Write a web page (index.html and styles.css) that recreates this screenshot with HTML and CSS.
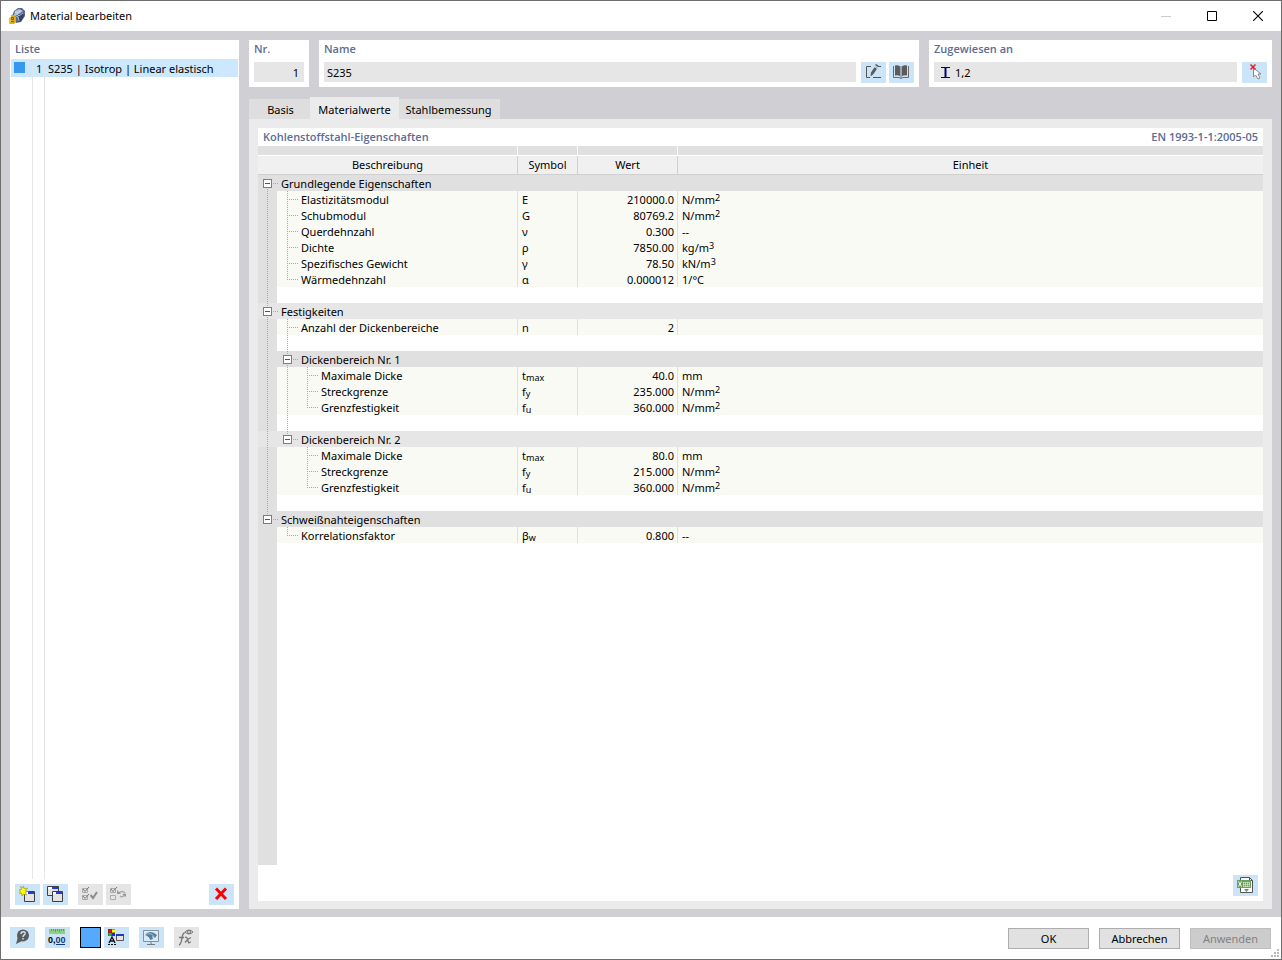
FILE: index.html
```html
<!DOCTYPE html>
<html lang="de">
<head>
<meta charset="utf-8">
<title>Material bearbeiten</title>
<link rel="stylesheet" href="styles.css">
</head>
<body>
<div class="window">
  <header class="titlebar">
    <svg class="app-icon" width="17" height="16" viewBox="0 0 17 16" aria-hidden="true">
      <path d="M3 8L5 3l4-3h4l3 3v5l-4 6-5 1z" fill="#56688c"/>
      <path d="M6 3l4-2 4 2-4 3-5 2z" fill="#b3c1dd"/>
      <path d="M10 7l4-2 1 3-3 5-3 1z" fill="#34425f"/>
      <path d="M6 4l3 1 3-3M8 6l2 2 4-3M5 7l4 2 1 4" fill="none" stroke="#e0e7f4" stroke-width=".7"/>
      <path d="M2 7h4v2h1v5l-2 2H1l-1-1v-5l2-1z" fill="#e0ac19"/>
      <path d="M2.500 9.500h2v2h-2zM2 13.500h3" stroke="#795b17" fill="none"/>
      <path d="M1 10v4" stroke="#ffe06a" fill="none"/>
    </svg>
    <h1 class="title">Material bearbeiten</h1>
    <div class="window-buttons">
      <button class="window-button" aria-label="Minimieren" disabled><svg width="10" height="10"><path d="M0 5.500h10" stroke="#ccc"/></svg></button>
      <button class="window-button" aria-label="Maximieren"><svg width="10" height="10"><path d="M.5.5h9v9h-9z" fill="none" stroke="#000"/></svg></button>
      <button class="window-button" aria-label="Schließen"><svg width="10" height="10"><path d="M0 0l10 10M10 0L0 10" stroke="#000" stroke-width="1.100"/></svg></button>
    </div>
  </header>

  <main class="content">
    <section class="list-panel">
      <h2 class="label">Liste</h2>
      <ul class="list">
        <li class="list-row">
          <span class="list-swatch"></span><span class="list-number">1</span><span class="list-text">S235 | Isotrop | Linear elastisch</span>
        </li>
      </ul>
      <div class="list-tools">
        <button class="tool" aria-label="Neu"><svg width="25" height="21" viewBox="0 0 25 21">
          <path d="M9.500 7.500h10v10h-10z" fill="#e4e4e4" stroke="#404040"/><path d="M10 8h9v2h-9z" fill="#fff"/><path d="M13 8h6v2h-6z" fill="#2639dc"/>
          <path d="M8.500 2l1 3 3-1-2 2.500 3 1-3 .5 1 3-3-1-1.500 2-.5-3-2 .5 1-2.500-1.500-1 2.500-.5-1-3 2.500 1.500z" fill="#ff0" stroke="#8c8c20" stroke-width=".6"/></svg></button>
        <button class="tool" aria-label="Kopieren"><svg width="25" height="21" viewBox="0 0 25 21">
          <path d="M4.500 2.500h11v9h-11z" fill="#e4e4e4" stroke="#404040"/><path d="M5 3h10v2H5z" fill="#fff"/><path d="M9 3h6v2H9z" fill="#2639dc"/>
          <path d="M9.500 7.500h10v10h-10z" fill="#e4e4e4" stroke="#404040"/><path d="M10 8h9v2h-9z" fill="#fff"/><path d="M13 8h6v2h-6z" fill="#2639dc"/></svg></button>
        <button class="tool tool-off tool-gap" aria-label="Alle auswählen" disabled><svg width="25" height="21" viewBox="0 0 25 21" fill="none" stroke="#aaa">
          <path d="M4.500 4.500h5v4h-5zM4.500 11.500h5v4h-5z"/><path d="M5 5l2 2.500 4-4.500M5 12l2 2.500 4-4.500" stroke="#777"/><path d="M12.500 11l2.500 3 4-6" stroke="#8d8d8d" stroke-width="2"/></svg></button>
        <button class="tool tool-off" aria-label="Auswahl umkehren" disabled><svg width="25" height="21" viewBox="0 0 25 21" fill="none" stroke="#aaa">
          <path d="M4.500 4.500h5v4h-5zM4.500 11.500h5v4h-5z"/><path d="M5 5l2 2.500 4-4.500" stroke="#777"/><path d="M13 9q3-3 6 0M19 11q-3 3-5 1" stroke-width="1.500"/><path d="M11 6v4h4zM20 13V9.500l-4 .5z" fill="#999" stroke="none"/></svg></button>
        <button class="tool tool-end" aria-label="Löschen"><svg width="25" height="21" viewBox="0 0 25 21"><path d="M7 4.500l10 10.500M17 4.500L7 15" stroke="#f00" stroke-width="3"/></svg></button>
      </div>
    </section>

    <div class="editor">
      <div class="fields">
        <div class="card card-number">
          <label class="label" for="nr">Nr.</label>
          <div class="field-row"><input class="field field-right" id="nr" value="1" readonly></div>
        </div>
        <div class="card card-name">
          <label class="label" for="name">Name</label>
          <div class="field-row">
            <input class="field" id="name" value="S235" readonly>
            <button class="tool" aria-label="Bearbeiten"><svg width="25" height="21" viewBox="0 0 25 21">
              <path d="M10 4.500H5.500v11H9M12 15.500h8M17 4.500h3" fill="none" stroke="#555"/><path d="M9.500 14.500l.5-4 4-6 2.500 1.500-4 6z" fill="#5b5b5b"/><path d="M13 4.500l3.500 2.500" stroke="#cce4f7" stroke-width=".8"/><path d="M14 3l1-1 2.500 1.500-.5 1.500z" fill="#5b5b5b"/></svg></button>
            <button class="tool" aria-label="Bibliothek"><svg width="25" height="21" viewBox="0 0 25 21">
              <path d="M6 3.500q3-1 5 1V14q-2-1-5-.5zM18 3.500q-3-1-5 1V14q2-1 5-.5z" fill="#5b5b5b"/><path d="M4.500 4v11.500h5.500l2 1 2-1h5.500V4M12 4v12" fill="none" stroke="#6b6b6b"/></svg></button>
          </div>
        </div>
        <div class="card card-assigned">
          <label class="label" for="assigned">Zugewiesen an</label>
          <div class="field-row">
            <div class="field field-icon">
              <svg width="9" height="12" viewBox="0 0 9 12" aria-hidden="true"><path d="M0 .5h9M0 10.500h9" stroke="#00007c"/><path d="M4.500 0v11" stroke="#00007c" stroke-width="2"/></svg>
              <input class="field-inner" id="assigned" value="1,2" readonly>
            </div>
            <button class="tool" aria-label="Auswählen"><svg width="25" height="21" viewBox="0 0 25 21">
              <path d="M11.500 6v9l2-2 2.500 4 2-1-2-4h3z" fill="#fff" stroke="#888"/><path d="M8.500 2.500l5 5M13.500 2.500l-5 5" stroke="#e81c2c" stroke-width="1.500"/></svg></button>
          </div>
        </div>
      </div>

      <div class="tabs" role="tablist">
        <button class="tab tab-first" role="tab" aria-selected="false">Basis</button>
        <button class="tab tab-active" role="tab" aria-selected="true">Materialwerte</button>
        <button class="tab tab-last" role="tab" aria-selected="false">Stahlbemessung</button>
      </div>

      <section class="pane" role="tabpanel">
        <div class="sheet">
          <div class="sheet-head"><h2 class="label">Kohlenstoffstahl-Eigenschaften</h2><span class="label">EN 1993-1-1:2005-05</span></div>
          <table class="grid">
            <colgroup><col class="col-name"><col class="col-symbol"><col class="col-value"><col></colgroup>
            <thead>
              <tr class="band"><td></td><td></td><td></td><td></td></tr>
              <tr class="heads"><th>Beschreibung</th><th>Symbol</th><th>Wert</th><th>Einheit</th></tr>
            </thead>
            <tbody>
              <tr class="group"><td colspan="4"><div class="tree"><span class="guide line-down"><button class="toggle" aria-label="Zuklappen"></button></span>Grundlegende Eigenschaften</div></td></tr>
              <tr class="leaf"><td><div class="tree"><span class="guide line"></span><span class="guide tee"></span>Elastizitätsmodul</div></td><td>E</td><td>210000.0</td><td>N/mm<sup>2</sup></td></tr>
              <tr class="leaf"><td><div class="tree"><span class="guide line"></span><span class="guide tee"></span>Schubmodul</div></td><td>G</td><td>80769.2</td><td>N/mm<sup>2</sup></td></tr>
              <tr class="leaf"><td><div class="tree"><span class="guide line"></span><span class="guide tee"></span>Querdehnzahl</div></td><td>ν</td><td>0.300</td><td>--</td></tr>
              <tr class="leaf"><td><div class="tree"><span class="guide line"></span><span class="guide tee"></span>Dichte</div></td><td>ρ</td><td>7850.00</td><td>kg/m<sup>3</sup></td></tr>
              <tr class="leaf"><td><div class="tree"><span class="guide line"></span><span class="guide tee"></span>Spezifisches Gewicht</div></td><td>γ</td><td>78.50</td><td>kN/m<sup>3</sup></td></tr>
              <tr class="leaf"><td><div class="tree"><span class="guide line"></span><span class="guide corner"></span>Wärmedehnzahl</div></td><td>α</td><td>0.000012</td><td>1/°C</td></tr>
              <tr class="blank"><td colspan="4"><div class="tree"><span class="guide line"></span></div></td></tr>
              <tr class="group group-light"><td colspan="4"><div class="tree"><span class="guide line"><button class="toggle" aria-label="Zuklappen"></button></span>Festigkeiten</div></td></tr>
              <tr class="leaf"><td><div class="tree"><span class="guide line"></span><span class="guide tee"></span>Anzahl der Dickenbereiche</div></td><td>n</td><td>2</td><td></td></tr>
              <tr class="blank"><td colspan="4"><div class="tree"><span class="guide line"></span><span class="guide line"></span></div></td></tr>
              <tr class="group"><td colspan="4"><div class="tree"><span class="guide line"></span><span class="guide line"><button class="toggle" aria-label="Zuklappen"></button></span>Dickenbereich Nr. 1</div></td></tr>
              <tr class="leaf"><td><div class="tree"><span class="guide line"></span><span class="guide line"></span><span class="guide tee"></span>Maximale Dicke</div></td><td>t<sub>max</sub></td><td>40.0</td><td>mm</td></tr>
              <tr class="leaf"><td><div class="tree"><span class="guide line"></span><span class="guide line"></span><span class="guide tee"></span>Streckgrenze</div></td><td>f<sub>y</sub></td><td>235.000</td><td>N/mm<sup>2</sup></td></tr>
              <tr class="leaf"><td><div class="tree"><span class="guide line"></span><span class="guide line"></span><span class="guide corner"></span>Grenzfestigkeit</div></td><td>f<sub>u</sub></td><td>360.000</td><td>N/mm<sup>2</sup></td></tr>
              <tr class="blank"><td colspan="4"><div class="tree"><span class="guide line"></span><span class="guide line"></span></div></td></tr>
              <tr class="group group-light"><td colspan="4"><div class="tree"><span class="guide line"></span><span class="guide line-up"><button class="toggle" aria-label="Zuklappen"></button></span>Dickenbereich Nr. 2</div></td></tr>
              <tr class="leaf"><td><div class="tree"><span class="guide line"></span><span class="guide"></span><span class="guide tee"></span>Maximale Dicke</div></td><td>t<sub>max</sub></td><td>80.0</td><td>mm</td></tr>
              <tr class="leaf"><td><div class="tree"><span class="guide line"></span><span class="guide"></span><span class="guide tee"></span>Streckgrenze</div></td><td>f<sub>y</sub></td><td>215.000</td><td>N/mm<sup>2</sup></td></tr>
              <tr class="leaf"><td><div class="tree"><span class="guide line"></span><span class="guide"></span><span class="guide corner"></span>Grenzfestigkeit</div></td><td>f<sub>u</sub></td><td>360.000</td><td>N/mm<sup>2</sup></td></tr>
              <tr class="blank"><td colspan="4"><div class="tree"><span class="guide line"></span></div></td></tr>
              <tr class="group"><td colspan="4"><div class="tree"><span class="guide line-up"><button class="toggle" aria-label="Zuklappen"></button></span>Schweißnahteigenschaften</div></td></tr>
              <tr class="leaf"><td><div class="tree"><span class="guide"></span><span class="guide corner"></span>Korrelationsfaktor</div></td><td>β<sub>w</sub></td><td>0.800</td><td>--</td></tr>
            </tbody>
          </table>
          <div class="gutter"></div>
          <div class="sheet-foot">
            <button class="tool" aria-label="Excel-Export"><svg width="25" height="21" viewBox="0 0 25 21">
              <path d="M7.500 2.500h9l3 3v12h-12z" fill="#fff" stroke="#555"/><path d="M16.500 2.500v3h3" fill="none" stroke="#555"/><path d="M4 5h14v8H4z" fill="#6b9f5b"/>
              <path d="M5.500 6.500l3 5M8.500 6.500l-3 5" stroke="#fff"/><path d="M10.500 7v5M12.500 7v5M14.500 7v5M16.500 7v5M10 7.500h7M10 9.500h7M10 11.500h7" stroke="#cfe5c6" stroke-width=".7"/><path d="M11 14h5l-2.500 3z" fill="#5b994a"/></svg></button>
          </div>
        </div>
      </section>
    </div>
  </main>

  <footer class="footer">
    <div class="footer-tools">
      <button class="tool" aria-label="Hilfe"><svg width="25" height="21" viewBox="0 0 25 21"><circle cx="13" cy="8.500" r="6" fill="#5b5b5b"/><path d="M8 10l-2 7 6-3z" fill="#5b5b5b"/><path d="M11 7c0-3 5-3 4 0-.5 1-2 1-2 3M13 11v1.500" fill="none" stroke="#cce4f7" stroke-width="1.500"/></svg></button>
      <button class="tool" aria-label="Einheiten"><svg width="25" height="21" viewBox="0 0 25 21"><path d="M4 2h16v5H4z" fill="#8fd183"/><path d="M6.500 2v2M8.500 2v2M10.500 2v3M12.500 2v2M14.500 2v3M16.500 2v2M18.500 2v2" stroke="#5da552"/><text class="icon-digits" x="3" y="16">0,<tspan fill="#123c80">00</tspan></text><path d="M11 17.500h9" stroke="#123c80"/></svg></button>
      <button class="color-swatch" aria-label="Farbe"></button>
      <button class="tool" aria-label="Darstellung"><svg width="25" height="21" viewBox="0 0 25 21"><path d="M4 2h7v7H4z" fill="#444"/><path d="M4.500 2.500h3v3h-3z" fill="#f00"/><path d="M8 2.500h3v3H8z" fill="#ff0"/><path d="M4.500 6h3v3h-3z" fill="#13bd25"/><path d="M8 6h3v3H8z" fill="#22f"/><path d="M5 16l3-6 3 6M6 14h4" fill="none" stroke="#111" stroke-width="1.300"/><path d="M4 17.500h2M7 17.500h2M10 17.500h2" stroke="#111"/><path d="M12.500 7.500h7v6h-7z" fill="#e4e4e4" stroke="#555"/><path d="M12 7h8v2h-8z" fill="#2639ad"/></svg></button>
      <button class="tool tool-gap" aria-label="Ansicht"><svg width="25" height="21" viewBox="0 0 25 21"><path d="M4.500 3.500h15v11h-15z" fill="#d9ebf9" stroke="#87919b"/><path d="M12 15v2M8 17.500h8" stroke="#777"/><path d="M6 8q5-6 12 0l-2 3-3-2 1 3-3 1q0-3-5-5z" fill="#557d9f"/><path d="M7 8q5-3 8 2M9 6q5 0 6 4" fill="none" stroke="#9fc0d9" stroke-width=".6"/></svg></button>
      <button class="tool tool-off tool-gap" aria-label="Formel" disabled><svg width="25" height="21" viewBox="0 0 25 21" fill="none" stroke="#777"><path d="M11 6c-4-1-2 11-6 12M5 10.500h5M11 10.500q2-1 2.500 2l1 3q1 1 2-1M17 10.500q-3 1-6 5" stroke-width="1.300"/><path d="M11 5q4-4 8 0-4 4-8 0z"/><circle cx="15" cy="5" r="1.500"/></svg></button>
    </div>
    <div class="actions">
      <button class="action">OK</button>
      <button class="action">Abbrechen</button>
      <button class="action" disabled>Anwenden</button>
    </div>
    <svg class="grip" width="9" height="9" viewBox="0 0 9 9" aria-hidden="true"><path d="M6 0h2v2H6zM3 3h2v2H3zM6 3h2v2H6zM0 6h2v2H0zM3 6h2v2H3zM6 6h2v2H6z" fill="#bbb"/></svg>
  </footer>
</div>
</body>
</html>
```
FILE: styles.css
```css
* { box-sizing: border-box; }
body { margin: 0; }
body, button, input { font-family: "Noto Sans", "Open Sans", sans-serif; font-size: 11px; line-height: 16px; color: #000; }
button, input { margin: 0; padding: 0; border: 0; border-radius: 0; }
h1, h2, ul { margin: 0; padding: 0; font-weight: normal; list-style: none; }
svg { display: block; flex: none; }

.window { min-height: 100vh; display: flex; flex-direction: column; border: 1px solid #6e6e6e; background: #fff; }

.titlebar { display: flex; align-items: center; height: 30px; padding-left: 8px; gap: 4px; }
.title { flex: 1; font-size: 11px; }
.window-buttons { display: flex; }
.window-button { display: flex; align-items: center; justify-content: center; width: 46px; height: 28px; background: none; }

.content { flex: 1; display: flex; gap: 10px; padding: 9px 9px 8px; background: #d0cfd4; }
.label { display: block; height: 19px; font-family: "Open Sans", "Noto Sans", sans-serif; font-size: 11px; line-height: 18px; font-weight: 600; color: #5c6c94; }

.list-panel { display: flex; flex-direction: column; flex: 0 0 229px; padding-bottom: 4px; background: #fff; }
.list-panel > .label { padding-left: 5px; }
.list { flex: 1; margin: 0 1px 5px; background: linear-gradient(#e6e6e6, #e6e6e6) 21px 0 / 1px 100% no-repeat, linear-gradient(#e6e6e6, #e6e6e6) 33px 0 / 1px 100% no-repeat; }
.list-row { display: flex; align-items: center; height: 18px; background: #cce8ff; line-height: 18px; }
.list-swatch { width: 11px; height: 11px; margin: 0 7px 2px 3px; background: #3898f0; }
.list-number { width: 12px; padding: 1px 0 0 3px; border-left: 1px solid #dce6ef; }
.list-text { padding: 1px 0 0 3px; border-left: 1px solid #dce6ef; }
.list-tools { display: flex; gap: 3px; padding: 0 5px; }

.tool { flex: none; width: 25px; height: 21px; background: #cce4f7; }
.tool-off { background: #e5e5e5; }
.tool-gap { margin-left: 7px; }
.tool-end { margin-left: auto; }

.editor { flex: 1; min-width: 0; display: flex; flex-direction: column; }
.fields { display: flex; gap: 10px; margin-bottom: 10px; }
.card { min-width: 0; padding: 0 5px 4px; background: #fff; }
.card .label { margin-bottom: 3px; }
.card-number { flex: 0 0 60px; }
.card-name { flex: 590 1 0; }
.card-assigned { flex: 333 1 0; }
.field-row { display: flex; gap: 3px; height: 21px; }
.field { flex: 1; min-width: 0; height: 20px; margin-right: 2px; padding: 1px 3px 0; background: #e6e6e6; }
.field-right { margin-right: 0; padding-right: 5px; text-align: right; }
.field-icon { display: flex; align-items: center; gap: 5px; padding-left: 7px; }
.field-inner { flex: 1; min-width: 0; background: none; }

.tabs { display: flex; align-items: flex-end; height: 22px; }
.tab { height: 20px; padding: 2px 0 0 2px; background: #dedede; }
.tab-first { width: 61px; }
.tab-active { width: 89px; height: 22px; padding: 4px 0 0; background: #ebebeb; }
.tab-last { width: 101px; padding: 2px 2px 0 0; }

.pane { flex: 1; display: flex; padding: 9px 9px 8px; background: #ebebeb; }
.sheet { flex: 1; min-width: 0; display: flex; flex-direction: column; background: #fff; }
.sheet-head { display: flex; justify-content: space-between; height: 18px; padding: 0 5px; }

.grid { width: 100%; table-layout: fixed; border-spacing: 0; }
.grid td, .grid th { padding: 0; font-weight: normal; white-space: nowrap; }
.col-name { width: 260px; }
.col-symbol { width: 60px; }
.col-value { width: 100px; }
.band td { height: 10px; background: #e0e0e0; border-right: 1px solid #fff; border-bottom: 1px solid #fff; }
.heads th { height: 19px; background: #f0f0f0; border-right: 1px solid #d0d0d0; border-bottom: 1px solid #d0d0d0; }
.band td:last-child, .heads th:last-child { border-right: 0; }
.group td { background: #e0e0e0; }
.group-light td { background: #e6e6e6; }
.grid .leaf td { height: 16px; padding: 2px 0 0 4px; background: #f9faf4; border-right: 1px solid #e0e0e0; line-height: 14px; }
.grid .leaf td:first-child { padding: 0; }
.grid .leaf td:nth-child(3) { padding-right: 3px; text-align: right; }
.grid .leaf td:last-child { border-right: 0; }
sup, sub { font-size: 9px; line-height: 0; }
sup { vertical-align: 3px; }
sub { vertical-align: -1px; }

.tree { display: flex; height: 16px; padding-right: 3px; line-height: 18px; }
.guide { --down: linear-gradient(#a8a8a8 50%, transparent 50%); --across: linear-gradient(90deg, #a8a8a8 50%, transparent 50%); position: relative; flex: none; width: 20px; height: 16px; }
.guide:last-child { margin-right: 3px; }
.guide:first-child { width: 19px; margin-right: 1px; background-color: #e0e0e0; }
.group .guide:first-child { background-color: transparent; }
.guide:last-child:first-child { margin-right: 4px; }
.guide::before { content: ""; position: absolute; left: 9px; top: 0; width: 1px; height: 0; background: var(--down) 0 0 / 1px 2px; }
.line::before { height: 16px; }
.tee::before { height: 16px; }
.corner::before, .line-up::before { height: 8px; }
.line-down::before { top: 8px; height: 8px; }
.tee::after, .corner::after { content: ""; position: absolute; left: 9px; top: 8px; width: 12px; height: 1px; background: var(--across) 0 0 / 2px 1px; }
.toggle { position: absolute; left: 5px; top: 4px; width: 9px; height: 9px; border: 1px solid #7c7c7c; background: linear-gradient(#555, #555) 1px 3px / 5px 1px no-repeat #fff; }
.toggle::after { content: ""; position: absolute; left: 9px; top: 3px; width: 5px; height: 1px; background: linear-gradient(90deg, #a8a8a8 50%, transparent 50%) 0 0 / 2px 1px; }

.gutter { flex: 1; width: 19px; background: #e0e0e0; }
.sheet-foot { display: flex; justify-content: flex-end; padding: 10px 5px 5px; }

.footer { position: relative; display: flex; justify-content: space-between; padding: 10px 10px 10px 9px; }
.footer-tools { display: flex; gap: 3px; height: 22px; }
.footer-tools > .tool:nth-child(2) { margin-left: 7px; }
.color-swatch { width: 21px; height: 21px; margin-left: 7px; border: 1px solid #000; background: #55aaff; }
.icon-digits { font: bold 9px "Liberation Sans", sans-serif; }
.actions { display: flex; gap: 10px; padding-top: 1px; }
.action { width: 81px; height: 21px; border: 1px solid #adadad; background: #e1e1e1; }
.action:disabled { border-color: #bfbfbf; background: #ccc; color: #838383; }
.grip { position: absolute; right: 1px; bottom: 1px; }
```
